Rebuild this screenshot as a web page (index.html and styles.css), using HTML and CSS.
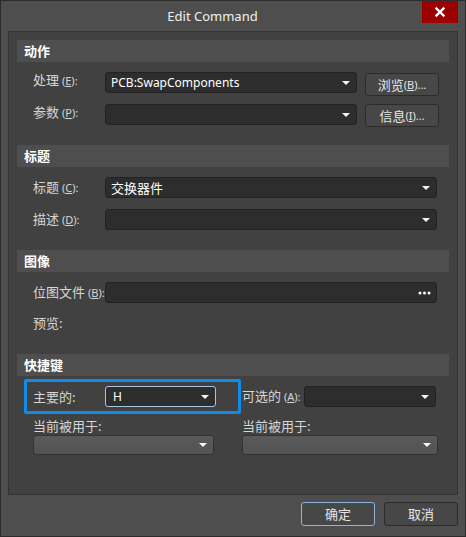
FILE: index.html
```html
<!DOCTYPE html>
<html>
<head>
<meta charset="utf-8">
<link rel="stylesheet" href="styles.css">
</head>
<body>
<div class="window">
  <div class="titlebar">
    <span class="title">Edit Command</span>
    <div class="close"><svg width="10" height="10" viewBox="0 0 10 10"><path d="M1.5 1.5 L8.5 8.5 M8.5 1.5 L1.5 8.5" stroke="#fff" stroke-width="2.4" stroke-linecap="square"/></svg></div>
  </div>
  <div class="panel">
    <div class="header">动作</div>
    <div class="row r1">
      <span class="label">处理 <span class="key">(<u>E</u>):</span></span>
      <div class="combo w-short"><span class="val">PCB:SwapComponents</span><i class="arrow"></i></div>
      <div class="btn b1">浏览 <span class="key">(<u>B</u>)...</span></div>
    </div>
    <div class="row r2">
      <span class="label">参数 <span class="key">(<u>P</u>):</span></span>
      <div class="combo w-short"><span class="val"></span><i class="arrow"></i></div>
      <div class="btn b2">信息 <span class="key">(<u>I</u>)...</span></div>
    </div>

    <div class="header h2">标题</div>
    <div class="row r3">
      <span class="label">标题 <span class="key">(<u>C</u>):</span></span>
      <div class="combo w-long"><span class="val cjk">交换器件</span><i class="arrow"></i></div>
    </div>
    <div class="row r4">
      <span class="label">描述 <span class="key">(<u>D</u>):</span></span>
      <div class="combo w-long"><span class="val"></span><i class="arrow"></i></div>
    </div>

    <div class="header h3">图像</div>
    <div class="row r5">
      <span class="label">位图文件 <span class="key">(<u>B</u>):</span></span>
      <div class="combo w-long"><span class="val"></span>
        <svg class="dots" width="13" height="4" viewBox="0 0 13 4"><circle cx="2" cy="2" r="1.5" fill="#fff"/><circle cx="6.5" cy="2" r="1.5" fill="#fff"/><circle cx="11" cy="2" r="1.5" fill="#fff"/></svg>
      </div>
    </div>
    <div class="row r6">
      <span class="label">预览:</span>
    </div>

    <div class="header h4">快捷键</div>
    <div class="row r7">
      <div class="highlight">
        <span class="label">主要的:</span>
        <div class="combo focus"><span class="val">H</span><i class="arrow"></i></div>
      </div>
      <span class="label alt">可选的 <span class="key">(<u>A</u>):</span></span>
      <div class="combo w-alt"><span class="val"></span><i class="arrow"></i></div>
    </div>
    <div class="row r8">
      <span class="label used">当前被用于:</span>
      <span class="label used2">当前被用于:</span>
    </div>
    <div class="row r9">
      <div class="combo disabled dl"><span class="val"></span><i class="arrow"></i></div>
      <div class="combo disabled dr"><span class="val"></span><i class="arrow"></i></div>
    </div>
  </div>
  <div class="footer">
    <div class="btn fbtn ok">确定</div>
    <div class="btn fbtn">取消</div>
  </div>
</div>
</body>
</html>
```
FILE: styles.css
```css
* { box-sizing: border-box; }
html, body { margin: 0; padding: 0; background: #4d4d4d; }
body {
  font-family: "Noto Sans", "Noto Sans CJK SC", sans-serif;
  font-size: 13px;
  color: #dcdcdc;
}
.window {
  width: 466px;
  height: 537px;
  background: #4e4e4e;
  border: 1px solid #2c2c2c;
  display: flex;
  flex-direction: column;
}
.titlebar {
  position: relative;
  height: 30px;
  display: flex;
  align-items: center;
  justify-content: center;
}
.title {
  font-family: "Noto Sans", sans-serif;
  font-size: 13px;
  color: #f0f0f0;
  line-height: 16px;
  margin-top: -1px;
  margin-left: -41px;
}
.close {
  position: absolute;
  top: 0;
  right: 7px;
  width: 36px;
  height: 22px;
  background: #9c0000;
  display: flex;
  align-items: center;
  justify-content: center;
}
.panel {
  margin: 0 7px;
  height: 464px;
  background: #414141;
  border: 1px solid #343434;
  padding: 8px 8px 0 8px;
  display: flex;
  flex-direction: column;
}
.header {
  height: 22px;
  background: #4e4e4e;
  color: #fff;
  font-family: "Noto Sans CJK SC", sans-serif;
  font-weight: bold;
  font-size: 13px;
  line-height: 22px;
  padding-left: 7px;
  flex: none;
}
.h2 { margin-top: 17px; }
.h3 { margin-top: 20px; }
.h4 { margin-top: 22px; }
.row {
  display: flex;
  align-items: center;
  flex: none;
}
.label {
  font-family: "Noto Sans CJK SC", sans-serif;
  font-size: 13px;
  line-height: 16px;
  color: #d6d6d6;
  width: 88px;
  padding-left: 16px;
  white-space: nowrap;
  flex: none;
}
.key {
  font-family: "Noto Sans", sans-serif;
  font-size: 11px;
}
.combo {
  position: relative;
  height: 21px;
  background: #2d2d2d;
  border: 1px solid #222;
  border-radius: 3px;
  display: flex;
  align-items: center;
  padding-left: 5px;
  flex: none;
}
.val {
  font-family: "Noto Sans", sans-serif;
  font-size: 12px;
  color: #fff;
  line-height: 16px;
}
.val.cjk { font-family: "Noto Sans CJK SC", sans-serif; font-size: 13px; }
.arrow {
  position: absolute;
  right: 6px;
  top: 8px;
  width: 0;
  height: 0;
  border-left: 4px solid transparent;
  border-right: 4px solid transparent;
  border-top: 4px solid #f4f4f4;
}
.dots { position: absolute; right: 5px; top: 8px; }
.w-short { width: 252px; }
.w-long { width: 332px; }
.btn {
  height: 23px;
  background: #474747;
  border: 1px solid #2b2b2b;
  border-radius: 3px;
  display: flex;
  align-items: center;
  justify-content: center;
  font-family: "Noto Sans CJK SC", sans-serif;
  font-size: 13px;
  color: #e6e6e6;
  line-height: 16px;
  flex: none;
}
.b1, .b2 { width: 74px; margin-left: 8px; }
.r1 { margin-top: 10px; height: 24px; align-items: flex-start; }
.r1 .b1 { margin-top: 1px; }
.r2 { margin-top: 8px; height: 24px; align-items: flex-start; }
.r3 { margin-top: 10px; height: 21px; }
.r4 { margin-top: 11px; height: 21px; }
.r5 { margin-top: 10px; height: 21px; }
.r6 { margin-top: 11px; height: 18px; }
.r7 { margin-top: 3px; height: 35px; }
.highlight {
  margin-left: 7px;
  width: 217px;
  height: 35px;
  border: 3px solid #108ce8;
  border-radius: 2px;
  display: flex;
  align-items: center;
  padding-left: 0;
  flex: none;
}
.highlight .label { width: 78px; padding-left: 6px; }
.focus {
  width: 111px;
  border-color: #a7c4e0;
}
.focus .val { margin-left: 2px; }
.label.alt { width: 63px; padding-left: 1px; }
.w-alt { width: 132px; }
.r8 { margin-top: 3px; height: 17px; }
.used { width: 225px; }
.used2 { padding-left: 0; }
.r9 { margin-top: 1px; height: 20px; }
.disabled {
  height: 20px;
  background: linear-gradient(#5a5a5a, #535353);
  border-color: #333;
}
.disabled .arrow { top: 7px; }
.dl { margin-left: 16px; width: 181px; }
.dr { margin-left: 28px; width: 196px; }
.footer {
  flex: 1;
  display: flex;
  justify-content: flex-end;
  align-items: flex-start;
  padding-top: 7px;
  padding-right: 7px;
}
.fbtn { width: 74px; height: 24px; margin-left: 9px; }
.ok { border-color: #8fb6dc; }
```
